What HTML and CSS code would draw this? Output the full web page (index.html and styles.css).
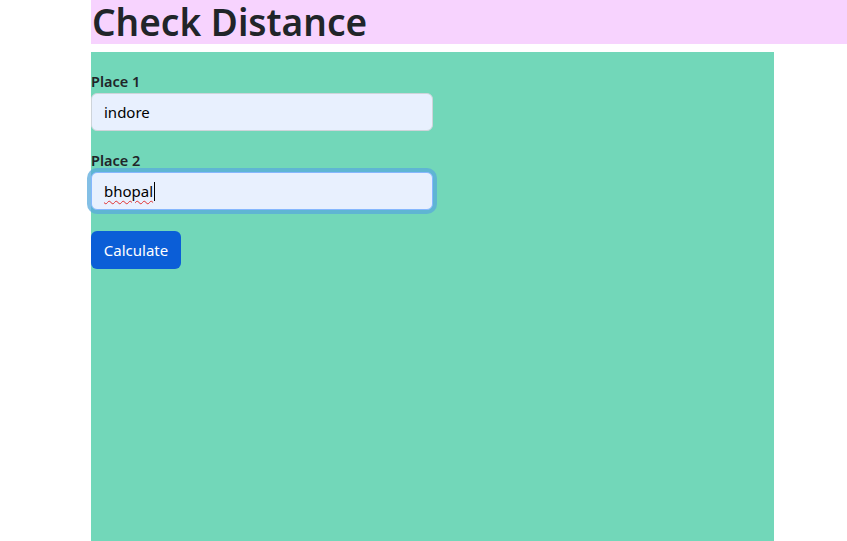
FILE: index.html
```html
<!DOCTYPE html>
<html>
<head>
<meta charset="utf-8">
<link rel="stylesheet" href="styles.css">
</head>
<body>
<h1 class="title">Check Distance</h1>
<div class="panel">
  <form class="form">
    <div class="field">
      <label class="label">Place 1</label>
      <input class="input" type="text" value="indore">
    </div>
    <div class="field">
      <label class="label">Place 2</label>
      <div class="input focus"><span class="typed">bhopal</span><span class="caret"></span></div>
    </div>
    <button class="btn" type="button">Calculate</button>
  </form>
</div>
</body>
</html>
```
FILE: styles.css
```css
html, body { margin: 0; padding: 0; background: #fff; }
body {
  font-family: "Noto Sans", "Open Sans", sans-serif;
  color: #212529;
  padding-left: 91px;
  height: 541px;
  overflow: hidden;
}
.title {
  margin: 0 0 8px 0;
  background: #f7d3fe;
  font-size: 37px;
  font-weight: 600;
  line-height: 44px;
  padding-left: 1px;
}
.panel {
  width: 683px;
  height: 489px;
  background: #72d7b9;
  padding-top: 17px;
  box-sizing: border-box;
}
.field { margin-bottom: 17px; }
.label {
  display: block;
  font-size: 14.5px;
  font-weight: 600;
  line-height: 24px;
  color: #212529;
}
.input {
  display: flex;
  align-items: center;
  box-sizing: border-box;
  width: 342px;
  height: 38px;
  margin: 0;
  padding: 0 12px;
  font-family: inherit;
  font-size: 15px;
  color: #000;
  background: #e8f0fe;
  border: 1px solid #ced4da;
  border-radius: 6px;
  outline: none;
}
.focus {
  border-color: #86b7fe;
  box-shadow: 0 0 0 4px rgba(90, 170, 220, 0.75);
}
.typed {
  text-decoration: underline wavy #e0302f;
  text-decoration-thickness: 1px;
  text-underline-offset: 3px;
}
.caret {
  display: inline-block;
  width: 1px;
  height: 19px;
  background: #000;
  margin-left: 1px;
}
.btn {
  margin-top: 4px;
  width: 90px;
  height: 38px;
  background: #0b5ed7;
  color: #fff;
  border: none;
  border-radius: 6px;
  font-family: inherit;
  font-size: 15px;
  padding: 0;
}
```
